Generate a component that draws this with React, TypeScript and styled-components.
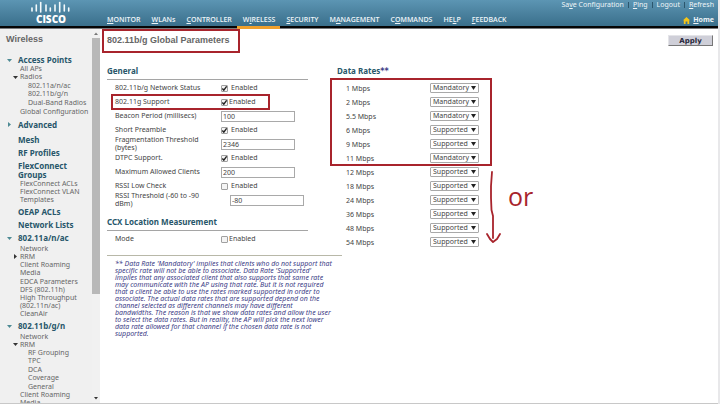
import React from "react";
import styled, { createGlobalStyle, css } from "styled-components";

const sans = `"Noto Sans", sans-serif`;
const wide = `"DejaVu Sans", sans-serif`;
const arial = `"Liberation Sans", sans-serif`;
const red = "#a8242c";

const Global = createGlobalStyle`
  * { box-sizing: border-box; }
  html, body, #root { height: 100%; }
  body { margin: 0; overflow: hidden; background: #fff; font-family: ${sans}; font-size: 7px; color: #444; }
  a { color: inherit; text-decoration: none; }
  u { text-underline-offset: 1px; }
`;

const Page = styled.div`
  display: flex;
  flex-direction: column;
  height: 100vh;
  border-right: 2px solid #e8e8ea;
`;

const Header = styled.header`
  display: flex;
  flex: none;
  height: 29px;
  padding-right: 4px;
  background: linear-gradient(#5c95b3, #3a6f8b 26px, #050505 26px, #050505 28px, #77797c 28px);
  color: #eef5f8;
`;

const Brand = styled.a`
  width: 101px;
  padding-left: 30px;
  flex: none;
`;

const LogoArt = styled.svg`
  display: block;
  width: 42px;
  height: 26px;
`;

const Nav = styled.nav`
  display: flex;
  flex: 1;
  align-items: flex-end;
`;

const NavItem = styled.a<{ $active?: boolean }>`
  height: 14px;
  padding: 0 5px 0 6px;
  font: 600 7px/10px "Open Sans", sans-serif;
  border-bottom: 3px solid ${(p) => (p.$active ? "#f0a02c" : "transparent")};
`;

const Tools = styled.div`
  display: flex;
  flex-direction: column;
  align-items: flex-end;
  justify-content: space-between;
  padding-bottom: 4px;
  line-height: 10px;
`;

const ToolLinks = styled.div`
  display: flex;
  gap: 4px;
`;

const Divider = styled.span`
  width: 1px;
  height: 6px;
  margin-top: 2px;
  background: #2c566d;
`;

const HomeLink = styled.a`
  display: flex;
  gap: 3px;
  align-items: center;
  font-weight: bold;
`;

const Body = styled.div`
  display: flex;
  flex: 1;
  min-height: 0;
  border-bottom: 1px solid #c8c8c8;
`;

const Sidebar = styled.aside`
  display: flex;
  flex: none;
  width: 100px;
  background: #f0f0f0;
`;

const Menu = styled.nav`
  flex: 1;
  overflow: hidden;
  white-space: nowrap;
  color: #666;
`;

const MenuTitle = styled.h2`
  margin: 4px 0 10px 6px;
  font: bold 9px/12px ${arial};
  color: #666;
`;

const MenuRow = styled.div<{ $level: number; $height: number }>`
  display: flex;
  height: ${(p) => p.$height}px;
  padding-left: ${(p) => [6, 12, 28][p.$level]}px;
  line-height: 8px;
  align-items: center;
  ${(p) =>
    p.$level === 0 &&
    css`
      font-weight: bold;
      font-size: 8px;
      color: #27566a;
    `}
`;

const Marker = styled.svg<{ $wide: boolean }>`
  flex: none;
  width: ${(p) => (p.$wide ? 12 : 8)}px;
  height: 5px;
`;

const Scrollbar = styled.div`
  display: flex;
  flex-direction: column;
  flex: none;
  width: 8px;
  background: #f1f1f1;
`;

const ScrollArrow = styled.svg`
  width: 8px;
  height: 9px;
  flex: none;
`;

const Thumb = styled.div`
  height: 72%;
  max-height: 257px;
  background: #b8b8b8;
`;

const ScrollTrack = styled.div`
  flex: 1;
`;

const Main = styled.main`
  flex: 1;
  min-width: 0;
  padding: 0 5px 0 7px;
`;

const TitleBar = styled.div`
  display: flex;
  justify-content: space-between;
  height: 36px;
`;

const Title = styled.h1`
  position: relative;
  margin: 5px 0 0;
  font: bold 9px/12px ${arial};
  color: #666;
  height: 12px;
`;

const ApplyButton = styled.button`
  width: 45px;
  height: 11px;
  margin-top: 6px;
  padding: 0;
  border: 1px solid;
  border-color: #e4e4e8 #777 #777 #e4e4e8;
  background: #cfcfd8;
  font: bold 7px/8px ${wide};
  color: #26263a;
`;

const Columns = styled.div`
  display: flex;
  gap: 29px;
`;

const Settings = styled.div`
  width: 201px;
  flex: none;
`;

const SectionTitle = styled.h3`
  margin: 0;
  height: 14px;
  font: bold 8px/12px ${sans};
  color: #27566a;
`;

const Section = styled.section`
  padding-top: 1px;
  border-top: 1px solid #a5a5a5;
`;

const FieldRow = styled.div`
  position: relative;
  display: flex;
  align-items: center;
  height: 14px;
  padding-left: 8px;
`;

const FieldLabel = styled.label`
  width: 106px;
  flex: none;
  line-height: 8px;
`;

const CheckLabel = styled.label<{ $tight?: boolean }>`
  display: flex;
  align-items: center;
  gap: ${(p) => (p.$tight ? 1 : 3)}px;
  line-height: 8px;
`;

const Check = styled.input`
  appearance: none;
  width: 7px;
  height: 7px;
  margin: 0;
  border: 1px solid #a0a0a0;
  border-radius: 1px;
  background: #f4f4f4;
  &:checked {
    background: #f4f4f4 url("data:image/svg+xml,%3Csvg xmlns='http://www.w3.org/2000/svg' viewBox='0 0 7 7'%3E%3Cpath d='M1 3.5 2.7 5.5 6 1' fill='none' stroke='%23222' stroke-width='1.6'/%3E%3C/svg%3E") center / 6px;
  }
`;

const TextBox = styled.input<{ $inset?: boolean }>`
  width: 74px;
  height: 11px;
  margin: 0 0 0 ${(p) => (p.$inset ? 9 : 0)}px;
  padding: 0 1px;
  border: 1px solid #a9a9a9;
  background: #fff;
  font: 7px/9px ${sans};
  color: #444;
`;

const Note = styled.p`
  margin: 9px 0 0;
  padding: 4px 0 0 8px;
  width: 235px;
  border-top: 1px solid #b8b8a8;
  font-style: italic;
  line-height: 7px;
  color: #3c3c86;
  white-space: nowrap;
`;

const CcxTitle = styled(SectionTitle)`
  margin-top: 9px;
`;

const Stars = styled.span`
  font-family: ${wide};
  color: #3c3c86;
`;

const Rates = styled.section`
  width: 155px;
  flex: none;
`;

const RateList = styled.div`
  position: relative;
  padding-top: 2px;
`;

const RateRow = styled.div`
  display: flex;
  align-items: center;
  height: 14px;
  padding-left: 9px;
`;

const RateLabel = styled.label`
  width: 84px;
`;

const SelectWrap = styled.span`
  position: relative;
  display: flex;
`;

const RateSelect = styled.select`
  appearance: none;
  width: 49px;
  height: 10px;
  padding: 0 2px;
  border: 1px solid #a9a9a9;
  border-radius: 1px;
  background: #fff;
  font: 7px/8px ${sans};
  color: #444;
`;

const SelectArrow = styled.svg`
  position: absolute;
  right: 3px;
  top: 3px;
  width: 5px;
  height: 4px;
  pointer-events: none;
`;

const outline = css`
  position: absolute;
  border: 2px solid ${red};
  pointer-events: none;
`;

const TitleMark = styled.span`
  ${outline}
  inset: -5px -10px -7px -5px;
`;

const RowMark = styled.span`
  ${outline}
  inset: -1px 38px -1px 4px;
`;

const RatesMark = styled.span`
  ${outline}
  left: -7px;
  right: 0;
  top: -1px;
  height: 88px;
`;

const ArrowSketch = styled.svg`
  position: absolute;
  left: 148px;
  top: 91px;
  width: 16px;
  height: 74px;
`;

const OrNote = styled.span`
  position: absolute;
  left: 171px;
  top: 103px;
  font: 500 25px/28px "Open Sans", sans-serif;
  color: ${red};
`;

const logoBars = [
  [2, 8, 11], [6.3, 5, 11], [10.7, 2.5, 12], [16, 5, 11], [20.3, 8, 11],
  [25, 5, 11], [29.7, 2.5, 12], [34.3, 5, 11], [38.7, 8, 11],
];

function Logo() {
  return (
    <LogoArt viewBox="0 0 42 26" aria-label="Cisco">
      {logoBars.map(([x, a, b]) => (
        <path key={x} d={`M${x} ${a}V${b}`} stroke="#f4fafc" strokeWidth="1.6" strokeLinecap="round" />
      ))}
      <text x="21" y="23" textAnchor="middle" fontFamily="Open Sans, sans-serif" fontWeight="800" fontSize="10" fill="#fff">CISCO</text>
    </LogoArt>
  );
}

const navItems: [string, string, string][] = [
  ["", "M", "ONITOR"], ["", "W", "LANs"], ["", "C", "ONTROLLER"], ["W", "I", "RELESS"], ["", "S", "ECURITY"],
  ["M", "A", "NAGEMENT"], ["C", "O", "MMANDS"], ["HE", "L", "P"], ["", "F", "EEDBACK"],
];

type Mark = "down" | "right";
const menu: [number, string, number, Mark?][] = [
  [0, "Access Points", 10, "down"],
  [1, "All APs", 8],
  [1, "Radios", 8, "down"],
  [2, "802.11a/n/ac", 9],
  [2, "802.11b/g/n", 8],
  [2, "Dual-Band Radios", 9],
  [1, "Global Configuration", 9],
  [0, "Advanced", 17, "right"],
  [0, "Mesh", 13],
  [0, "RF Profiles", 14],
  [0, "FlexConnect", 11],
  [0, "Groups", 8],
  [1, "FlexConnect ACLs", 9],
  [1, "FlexConnect VLAN", 8],
  [1, "Templates", 8],
  [0, "OEAP ACLs", 15],
  [0, "Network Lists", 12],
  [0, "802.11a/n/ac", 14, "down"],
  [1, "Network", 7],
  [1, "RRM", 9, "right"],
  [1, "Client Roaming", 8],
  [1, "Media", 8],
  [1, "EDCA Parameters", 9],
  [1, "DFS (802.11h)", 8],
  [1, "High Throughput", 8],
  [1, "(802.11n/ac)", 8],
  [1, "CleanAir", 8],
  [0, "802.11b/g/n", 16, "down"],
  [1, "Network", 6],
  [1, "RRM", 9, "down"],
  [2, "RF Grouping", 8],
  [2, "TPC", 8],
  [2, "DCA", 9],
  [2, "Coverage", 8],
  [2, "General", 9],
  [1, "Client Roaming", 8],
  [1, "Media", 8],
];

const noteLines = [
  "** Data Rate 'Mandatory' implies that clients who do not support that",
  "specific rate will not be able to associate. Data Rate 'Supported'",
  "implies that any associated client that also supports that same rate",
  "may communicate with the AP using that rate. But it is not required",
  "that a client be able to use the rates marked supported in order to",
  "associate. The actual data rates that are supported depend on the",
  "channel selected as different channels may have different",
  "bandwidths. The reason is that we show data rates and allow the user",
  "to select the data rates. But in reality, the AP will pick the next lower",
  "data rate allowed for that channel if the chosen data rate is not",
  "supported.",
];

const rates: [string, string][] = [
  ["1", "Mandatory"], ["2", "Mandatory"], ["5.5", "Mandatory"], ["6", "Supported"], ["9", "Supported"], ["11", "Mandatory"],
  ["12", "Supported"], ["18", "Supported"], ["24", "Supported"], ["36", "Supported"], ["48", "Supported"], ["54", "Supported"],
];

function CheckRow({ id, label, on, tight, marked }: { id: string; label: string; on?: boolean; tight?: boolean; marked?: boolean }) {
  return (
    <FieldRow>
      <FieldLabel htmlFor={id}>{label}</FieldLabel>
      <CheckLabel $tight={tight}>
        <Check id={id} type="checkbox" defaultChecked={on} />
        Enabled
      </CheckLabel>
      {marked && <RowMark />}
    </FieldRow>
  );
}

function TextRow({ id, label, value, inset }: { id: string; label: React.ReactNode; value: string; inset?: boolean }) {
  return (
    <FieldRow>
      <FieldLabel htmlFor={id}>{label}</FieldLabel>
      <TextBox id={id} defaultValue={value} $inset={inset} />
    </FieldRow>
  );
}

export default function App() {
  return (
    <Page>
      <Global />
      <Header>
        <Brand href="#"><Logo /></Brand>
        <Nav>
          {navItems.map(([a, k, b]) => (
            <NavItem key={a + k + b} href="#" $active={k === "I"}>{a}<u>{k}</u>{b}</NavItem>
          ))}
        </Nav>
        <Tools>
          <ToolLinks>
            <a href="#">Sa<u>v</u>e Configuration</a><Divider />
            <a href="#"><u>P</u>ing</a><Divider />
            <a href="#">Logout</a><Divider />
            <a href="#"><u>R</u>efresh</a>
          </ToolLinks>
          <HomeLink href="#">
            <svg width="7" height="7" viewBox="0 0 7 7"><path d="M3.5 0 7 3.2H6.2V7H4.4V4.4H2.6V7H.8V3.2H0Z" fill="#f5c518" /></svg>
            <span><u>H</u>ome</span>
          </HomeLink>
        </Tools>
      </Header>
      <Body>
        <Sidebar>
          <Menu>
            <MenuTitle>Wireless</MenuTitle>
            {menu.map(([level, text, height, mark], i) => (
              <MenuRow key={i} $level={level} $height={height}>
                {level < 2 && (
                  <Marker $wide={level === 0} viewBox={level === 0 ? "0 0 12 5" : "0 0 8 5"}>
                    {mark === "down" && <path d="M1 1H6L3.5 4Z" fill={level ? "#333" : "#4d8a94"} />}
                    {mark === "right" && <path d="M2 0V5L5 2.5Z" fill={level ? "#333" : "#4d8a94"} />}
                  </Marker>
                )}
                <a href="#">{text}</a>
              </MenuRow>
            ))}
          </Menu>
          <Scrollbar>
            <ScrollArrow viewBox="0 0 8 9"><path d="M2 6H6L4 3.5Z" fill="#777" /></ScrollArrow>
            <ScrollTrack><Thumb /></ScrollTrack>
            <ScrollArrow viewBox="0 0 8 9"><path d="M2 3H6L4 5.5Z" fill="#333" /></ScrollArrow>
          </Scrollbar>
        </Sidebar>
        <Main>
          <TitleBar>
            <Title>802.11b/g Global Parameters<TitleMark /></Title>
            <ApplyButton type="button">Apply</ApplyButton>
          </TitleBar>
          <Columns>
            <Settings>
              <SectionTitle>General</SectionTitle>
              <Section>
                <CheckRow id="status" label="802.11b/g Network Status" on />
                <CheckRow id="support" label="802.11g Support" on tight marked />
                <TextRow id="beacon" label="Beacon Period (millisecs)" value="100" />
                <CheckRow id="preamble" label="Short Preamble" on />
                <TextRow id="frag" label={<>Fragmentation Threshold<br />(bytes)</>} value="2346" />
                <CheckRow id="dtpc" label="DTPC Support." on />
                <TextRow id="clients" label="Maximum Allowed Clients" value="200" />
                <CheckRow id="rssi" label="RSSI Low Check" />
                <TextRow id="threshold" label={<>RSSI Threshold (-60 to -90<br />dBm)</>} value="-80" inset />
              </Section>
              <CcxTitle>CCX Location Measurement</CcxTitle>
              <Section>
                <CheckRow id="mode" label="Mode" tight />
              </Section>
              <Note>
                {noteLines.map((line) => <React.Fragment key={line}>{line}<br /></React.Fragment>)}
              </Note>
            </Settings>
            <Rates>
              <SectionTitle>Data Rates<Stars>**</Stars></SectionTitle>
              <RateList>
                {rates.map(([rate, value]) => (
                  <RateRow key={rate}>
                    <RateLabel htmlFor={"rate" + rate}>{rate} Mbps</RateLabel>
                    <SelectWrap>
                      <RateSelect id={"rate" + rate} defaultValue={value}>
                        <option>Mandatory</option>
                        <option>Supported</option>
                        <option>Disabled</option>
                      </RateSelect>
                      <SelectArrow viewBox="0 0 5 4"><path d="M0 0H5L2.5 4Z" fill="#222" /></SelectArrow>
                    </SelectWrap>
                  </RateRow>
                ))}
                <RatesMark />
                <ArrowSketch viewBox="0 0 16 74" fill="none" stroke={red} strokeWidth="1.8" strokeLinecap="round" strokeLinejoin="round">
                  <path d="M7 2 6 16 6 28 6.500 40 8 46 8 68M2 64 5 69 8 72 12 69 15 64" />
                </ArrowSketch>
                <OrNote>or</OrNote>
              </RateList>
            </Rates>
          </Columns>
        </Main>
      </Body>
    </Page>
  );
}
